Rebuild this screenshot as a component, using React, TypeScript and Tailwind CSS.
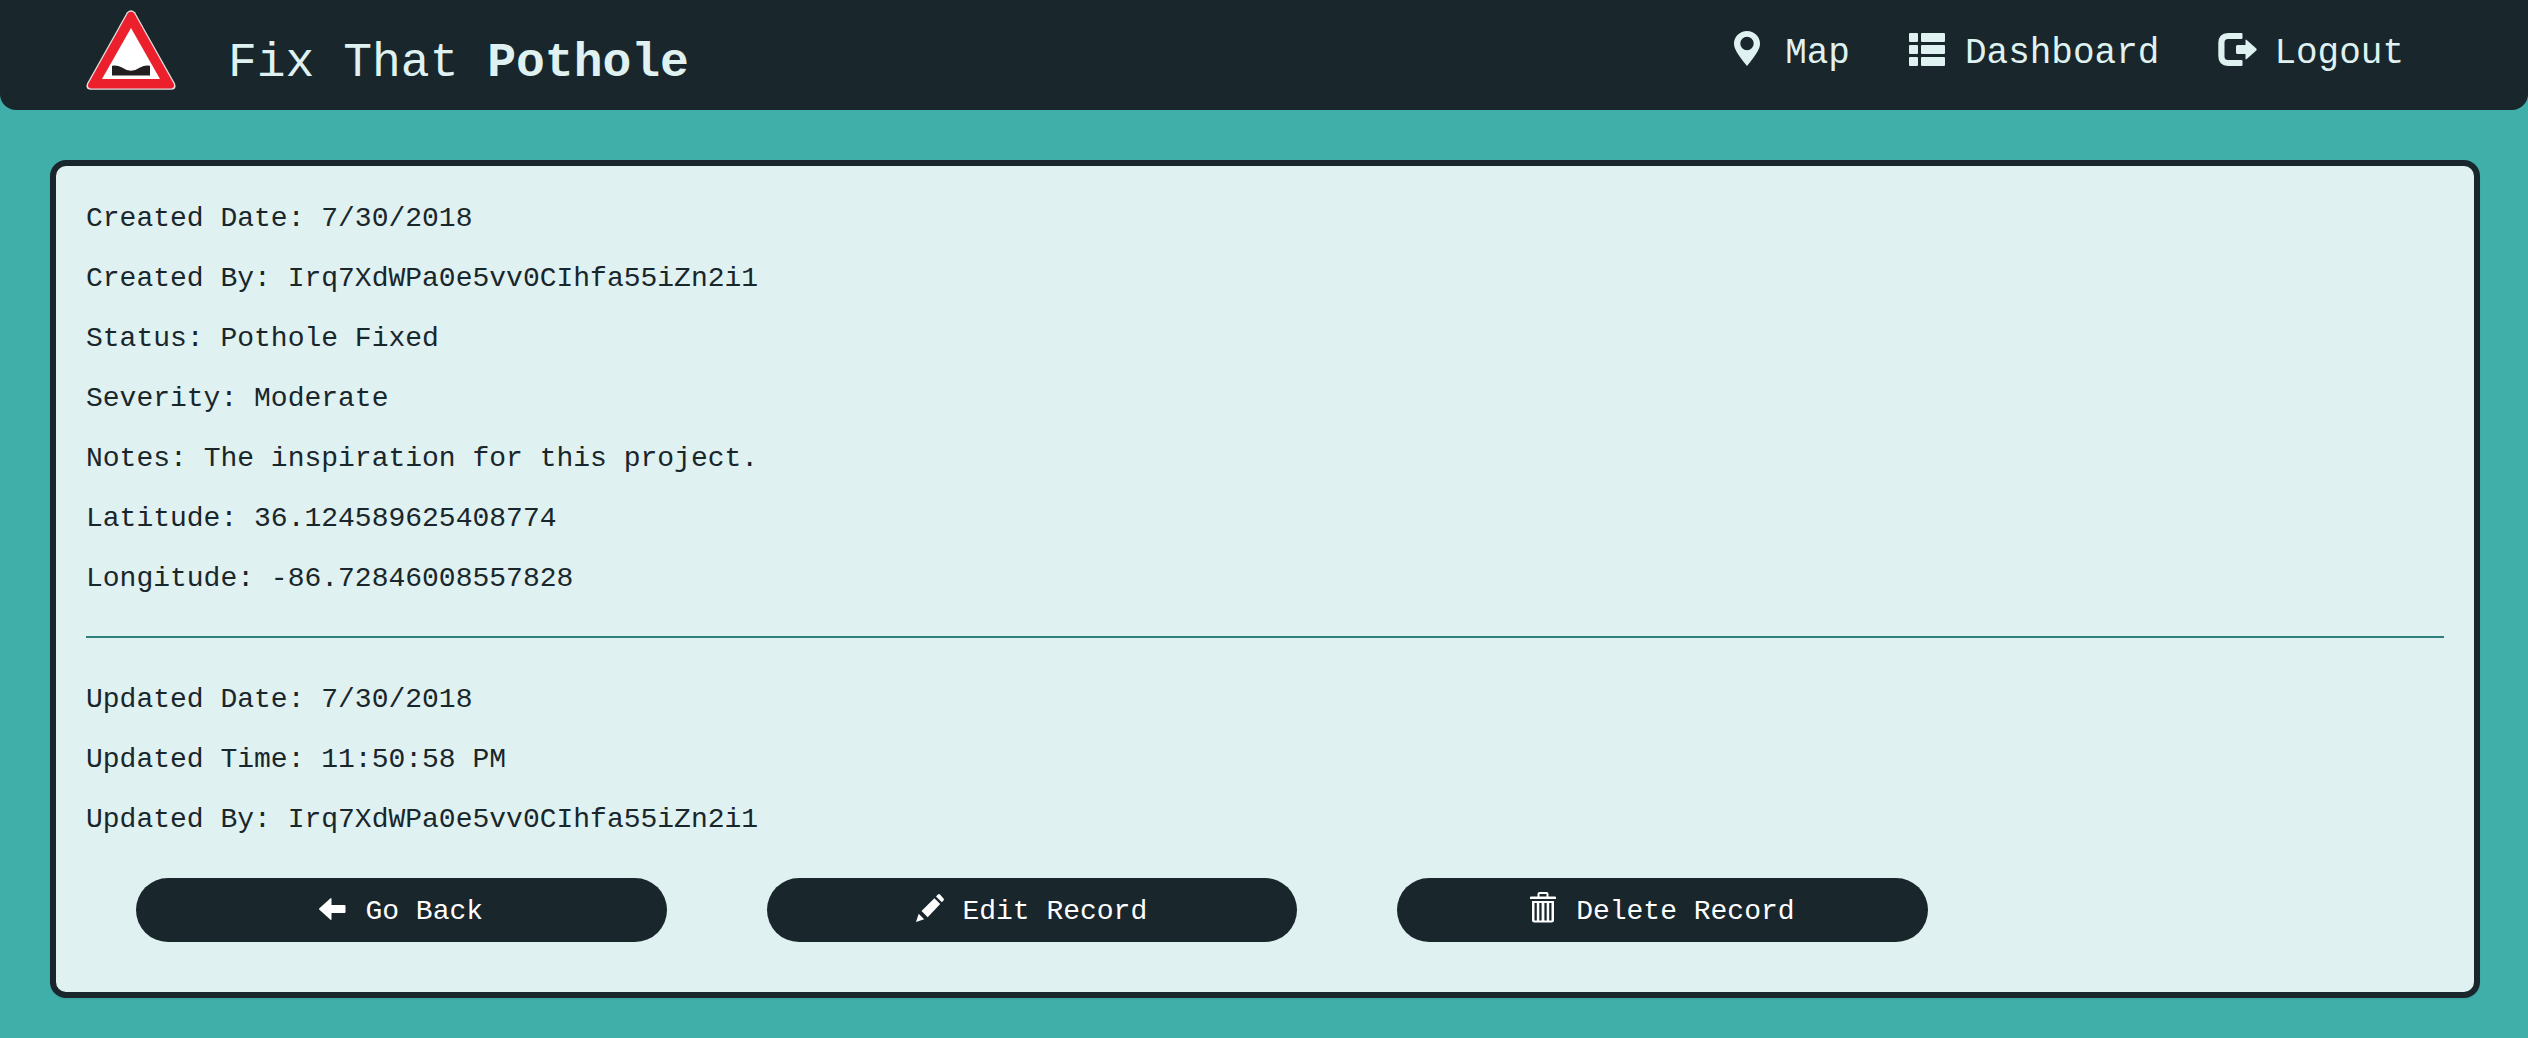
import type { ReactNode } from "react";

function PotholeSign() {
  return (
    <svg width="90" height="80" viewBox="0 0 90 80" role="img" aria-label="Pothole warning sign">
      <path
        d="M41 2.2Q45 -1.6 49 2.2L89 73.5Q91 79.6 85 79.8H5Q-1 79.6 1 73.5Z"
        fill="#e3dfe0"
      />
      <path
        d="M42 3Q45 0.6 48 3L87.8 74Q89 78 85 78.4H5Q1 78 2.2 74Z"
        fill="#ec202c"
      />
      <path d="M45 18L74 69H16Z" fill="#ffffff" />
      <path
        d="M26 55.8Q31 54.6 36 57.6Q45 64 54 57.6Q59 54.6 64 55.8V65.5H26Z"
        fill="#231f20"
      />
    </svg>
  );
}

function PinIcon() {
  return (
    <svg width="36" height="36" viewBox="0 0 36 36" fill="currentColor" aria-hidden="true">
      <path
        fillRule="evenodd"
        d="M18 1C25.2 1 31 6.600 31 13.600C31 18.500 28 24 18 36C8 24 5 18.500 5 13.600C5 6.600 10.800 1 18 1ZM18 6.800A6.700 6.700 0 1 0 18 20.200A6.700 6.700 0 1 0 18 6.800Z"
      />
    </svg>
  );
}

function ListIcon() {
  return (
    <svg width="36" height="36" viewBox="0 0 36 36" fill="currentColor" aria-hidden="true">
      <rect x="0" y="3" width="9" height="9" rx="1" />
      <rect x="12" y="3" width="24" height="9" rx="1" />
      <rect x="0" y="15" width="9" height="9" rx="1" />
      <rect x="12" y="15" width="24" height="9" rx="1" />
      <rect x="0" y="27" width="9" height="9" rx="1" />
      <rect x="12" y="27" width="24" height="9" rx="1" />
    </svg>
  );
}

function LogoutIcon() {
  return (
    <svg
      className="overflow-visible"
      width="36"
      height="36"
      viewBox="0 0 36 36"
      fill="currentColor"
      aria-hidden="true"
    >
      <path d="M10 3H23.500Q24.500 3 24.500 4V8Q24.500 9 23.500 9H10Q6.500 9 6.500 12.500V26.500Q6.500 30 10 30H23.500Q24.500 30 24.500 31V35Q24.500 36 23.500 36H10Q0.300 35.500 0.300 26V13Q0.300 3.500 10 3Z" />
      <path d="M19.500 15H27.500V10.500Q27.500 9 28.700 10L38.300 18.600Q39.200 19.500 38.300 20.400L28.700 29Q27.500 30 27.500 28.500V24H19.500Q18 24 18 22.500V16.500Q18 15 19.500 15Z" />
    </svg>
  );
}

function ArrowLeftIcon() {
  return (
    <svg width="28" height="28" viewBox="0 0 28 28" fill="currentColor" aria-hidden="true">
      <path d="M0.400 14.300L11.500 4.300Q12.500 3.700 12.500 5V11H25.500Q26.500 11 26.500 12V18Q26.500 19 25.500 19H12.500V25Q12.500 26.300 11.500 25.700L0.400 15.700Q-0.400 15 0.400 14.300Z" />
    </svg>
  );
}

function PencilIcon() {
  return (
    <svg width="28" height="28" viewBox="0 0 28 28" fill="currentColor" aria-hidden="true">
      <path d="M21.800 0.600Q23 -0.400 24.200 0.700L27.500 4.400Q28.300 5.500 27.500 6.500L25.800 8.200L20 2.500Z" />
      <path d="M18.400 4.200L24.200 10L11.700 23.200L5.500 17Z" />
      <path d="M2.700 19.800L8.200 25.300L0 28Z" />
    </svg>
  );
}

function TrashIcon() {
  return (
    <svg width="28" height="32" viewBox="0 1 28 32" fill="currentColor" aria-hidden="true">
      <path
        fillRule="evenodd"
        d="M9.500 1H16.500Q18.500 1 18.500 3V5.500H25Q26 5.500 26 6.500V8H0V6.500Q0 5.500 1 5.500H7.500V3Q7.500 1 9.500 1ZM9.500 3V5.500H16.500V3Z"
      />
      <path
        fillRule="evenodd"
        d="M2 10H24V29Q24 31.500 21.500 31.500H4.500Q2 31.500 2 29ZM4.500 12V29.500H6.800V12ZM9.300 12V29.500H11.600V12ZM14.400 12V29.500H16.700V12ZM19.200 12V29.500H21.500V12Z"
      />
    </svg>
  );
}

function NavLink({ icon, children }: { icon: ReactNode; children: ReactNode }) {
  return (
    <a href="#" className="flex items-start gap-5 text-[36px] leading-[56px]">
      <span className="mt-1 flex">{icon}</span>
      <span>{children}</span>
    </a>
  );
}

function Field({ label, value }: { label: string; value: string }) {
  return (
    <p>
      {label}: {value}
    </p>
  );
}

function ActionButton({ icon, children }: { icon: ReactNode; children: ReactNode }) {
  return (
    <button
      type="button"
      className="mx-[50px] flex h-16 w-[22.5%] items-center justify-center gap-[18px] rounded-full bg-[#19262c] text-white"
    >
      <span className="mb-1 flex">{icon}</span>
      <span className="pt-1">{children}</span>
    </button>
  );
}

const created = [
  { label: "Created Date", value: "7/30/2018" },
  { label: "Created By", value: "Irq7XdWPa0e5vv0CIhfa55iZn2i1" },
  { label: "Status", value: "Pothole Fixed" },
  { label: "Severity", value: "Moderate" },
  { label: "Notes", value: "The inspiration for this project." },
  { label: "Latitude", value: "36.124589625408774" },
  { label: "Longitude", value: "-86.72846008557828" },
];

const updated = [
  { label: "Updated Date", value: "7/30/2018" },
  { label: "Updated Time", value: "11:50:58 PM" },
  { label: "Updated By", value: "Irq7XdWPa0e5vv0CIhfa55iZn2i1" },
];

export default function App() {
  return (
    <div className="min-h-screen bg-[#40afa9] pb-10 font-['Liberation_Mono',monospace] text-[28px] leading-10 text-[#19262c]">
      <header className="flex items-start justify-between rounded-b-2xl bg-[#19262c] pt-[10px] pr-[124px] pb-[14px] pl-[86px] text-[#dff1f0]">
        <a href="#" className="flex items-start gap-[52px]">
          <PotholeSign />
          <span className="mt-5 text-[48px] leading-[66px]">
            Fix That <strong>Pothole</strong>
          </span>
        </a>
        <nav className="flex gap-[59px] pt-4">
          <NavLink icon={<PinIcon />}>Map</NavLink>
          <NavLink icon={<ListIcon />}>Dashboard</NavLink>
          <NavLink icon={<LogoutIcon />}>Logout</NavLink>
        </nav>
      </header>
      <main className="mt-[50px] mr-12 ml-[50px] rounded-2xl border-[6px] border-[#19262c] bg-[#dff1f0] px-[30px] pt-[33px] pb-[50px] shadow-[0_2px_2px_rgba(0,0,0,0.05)]">
        <section className="flex flex-col gap-5">
          {created.map((f) => (
            <Field key={f.label} {...f} />
          ))}
        </section>
        <hr className="mt-[37px] mb-[42px] border-t-2 border-[#2f7f7b]" />
        <section className="flex flex-col gap-5">
          {updated.map((f) => (
            <Field key={f.label} {...f} />
          ))}
        </section>
        <div className="mt-[38px] flex">
          <ActionButton icon={<ArrowLeftIcon />}>Go Back</ActionButton>
          <ActionButton icon={<PencilIcon />}>Edit Record</ActionButton>
          <ActionButton icon={<TrashIcon />}>Delete Record</ActionButton>
        </div>
      </main>
    </div>
  );
}
